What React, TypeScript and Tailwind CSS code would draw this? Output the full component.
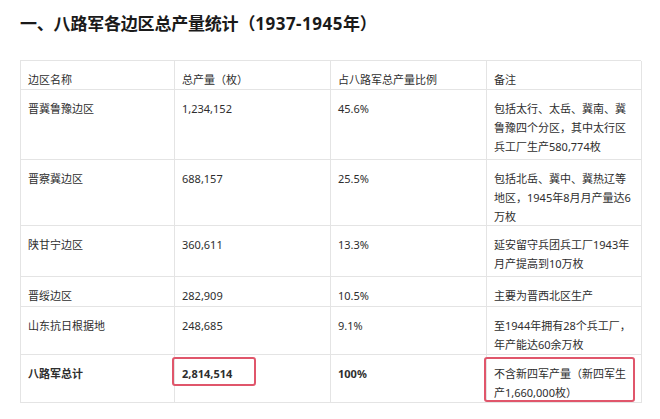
const rows = [
  { name: "晋冀鲁豫边区", total: "1,234,152", pct: "45.6%", note: ["包括太行、太岳、冀南、冀", "鲁豫四个分区，其中太行区", "兵工厂生产580,774枚"], h: "h-[70px]" },
  { name: "晋察冀边区", total: "688,157", pct: "25.5%", note: ["包括北岳、冀中、冀热辽等", "地区，1945年8月月产量达6", "万枚"], h: "h-[66px]" },
  { name: "陕甘宁边区", total: "360,611", pct: "13.3%", note: ["延安留守兵团兵工厂1943年", "月产提高到10万枚"], h: "h-[51px]" },
  { name: "晋绥边区", total: "282,909", pct: "10.5%", note: ["主要为晋西北区生产"], h: "h-[30px]" },
  { name: "山东抗日根据地", total: "248,685", pct: "9.1%", note: ["至1944年拥有28个兵工厂，", "年产能达60余万枚"], h: "h-[48px]" },
];

const cell = "border-r border-b border-[#e4e4e4] px-[7px] pt-[9px] pb-[4px] leading-[19px] relative";

export default function App() {
  return (
    <div className="w-[660px] h-[419px] bg-white overflow-hidden font-['Noto_Sans','Noto_Sans_CJK_SC',sans-serif] text-[11px] text-[#2e2e2e]">
      <h1 className="pl-[20px] pt-[11px] h-[60px] text-[17px] leading-[26px] font-bold text-[#1a1a1a] font-['Noto_Sans','Noto_Sans_CJK_SC',sans-serif] tracking-[-0.2px]">
        一、八路军各边区总产量统计（<span className="tracking-[0.5px]">1937-1945</span>年）
      </h1>
      <div className="ml-[20px] w-[621px] grid grid-cols-[154px_156px_156px_155px] border-t border-l border-[#e4e4e4]">
        <div className={`${cell} h-[29px] pt-[6px]`}>边区名称</div>
        <div className={`${cell} h-[29px] pt-[6px]`}>总产量（枚）</div>
        <div className={`${cell} h-[29px] pt-[6px]`}>占八路军总产量比例</div>
        <div className={`${cell} h-[29px] pt-[6px]`}>备注</div>
        {rows.map((r) => (
          <>
            <div key={r.name + "a"} className={`${cell} ${r.h}`}>{r.name}</div>
            <div key={r.name + "b"} className={`${cell} ${r.h}`}>{r.total}</div>
            <div key={r.name + "c"} className={`${cell} ${r.h}`}>{r.pct}</div>
            <div key={r.name + "d"} className={`${cell} ${r.h} whitespace-nowrap`}>
              {r.note.map((l) => (
                <div key={l}>{l}</div>
              ))}
            </div>
          </>
        ))}
        <div className={`${cell} h-[48px] font-bold`}>八路军总计</div>
        <div className={`${cell} h-[48px] font-bold`}>
          2,814,514
          <span className="absolute left-[-3px] top-[2px] w-[84px] h-[29px] border-[2.5px] border-[#e0566b] rounded-[3px]" />
        </div>
        <div className={`${cell} h-[48px] font-bold`}>100%</div>
        <div className={`${cell} h-[48px] whitespace-nowrap`}>
          <div>不含新四军产量（新四军生</div>
          <div>产1,660,000枚）</div>
          <span className="absolute left-[-3px] top-[2px] w-[151px] h-[45px] border-[2.5px] border-[#e0566b] rounded-[3px]" />
        </div>
      </div>
    </div>
  );
}
